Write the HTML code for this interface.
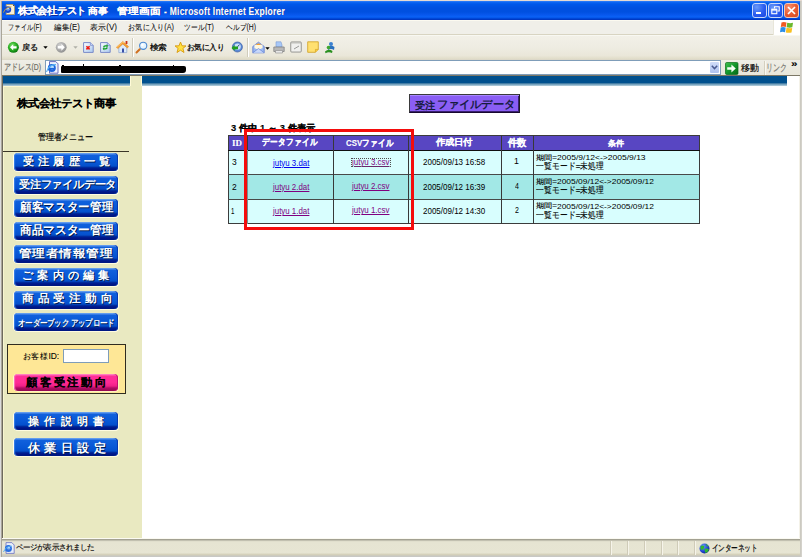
<!DOCTYPE html>
<html><head><meta charset="utf-8">
<style>
*{margin:0;padding:0;box-sizing:border-box}
html,body{width:802px;height:557px;overflow:hidden;background:#ece9d8;font-family:"Liberation Sans",sans-serif;position:relative}
.a{position:absolute}
.tx{position:absolute;white-space:nowrap;line-height:1;transform-origin:0 0;font-family:"Liberation Sans",sans-serif;}
svg{position:absolute;overflow:visible}
#frameL{left:0;top:0;width:2px;height:557px;background:linear-gradient(90deg,#dcdcdc 0,#dcdcdc 1px,#aaa69a 1px)}
#frameR{left:800px;top:0;width:2px;height:557px;background:linear-gradient(90deg,#c8c6bc,#d8d6d0)}
#topedge{left:0;top:0;width:802px;height:1px;background:#e6dad2}
#title{left:2px;top:1px;width:798px;height:19px;background:linear-gradient(#3a86fa 0,#1068f4 1px,#0058ea 3px,#0050e0 7px,#0050e0 11px,#0858ee 14px,#0a62f6 16px,#0048d8 17.5px,#0030b8 19px)}
#menu{left:2px;top:20px;width:798px;height:15px;background:#f0efe9;border-top:1px solid #fcfaf0;border-bottom:1px solid #d8d4c2}
#flag{left:773px;top:20px;width:27px;height:15px;background:#fff;border-left:1px solid #e8e6da}
#tool{left:2px;top:35px;width:798px;height:24px;background:linear-gradient(#f2f0e8 0,#eeece2 50%,#eae7d9 85%,#e0dcc8 100%);border-top:1px solid #f8f8f2}
#addr{left:2px;top:59px;width:798px;height:17px;background:linear-gradient(#efeee6 0,#e8e6da 15px,#7c7866 15px);border-top:1px solid #dcd8c8}
#addrbox{left:45px;top:60px;width:676px;height:15px;background:#fff;border:1px solid #7f9db9}
#page{left:2px;top:76px;width:797px;height:462px;background:#fff;border-left:1px solid #6e6a5e}
#side{left:3px;top:76px;width:139px;height:462px;background:#e9e9c1}
#pageR{left:799px;top:76px;width:1px;height:462px;background:#f4f2e8}
.bar{position:absolute;top:76px;height:7px;background:#00508e}
.barg{position:absolute;top:83px;height:3px;background:linear-gradient(#2a6a98,#88b0c8 60%,#b8d0dc)}
.btn{position:absolute;left:14px;width:104px;height:18px;border-radius:4px;background:linear-gradient(#7ab0f4 0,#4a88e8 1px,#1060dc 2.5px,#0858d6 50%,#0450cc 13px,#002a9c 14.5px,#001488 16px,#001a80 100%);box-shadow:inset 2px 0 1px -1px #3a80e8,inset -1px 0 0 #0838b0,1px 1px 0 #fffce0,-1px 0 0 #fffef0,0 1px 0 #fffce0}
#status{left:2px;top:538px;width:798px;height:19px;background:linear-gradient(#fbfaf2 0,#fbfaf2 1px,#9e9c8c 1px,#a8a698 2px,#dcdac8 3px,#e6e4d2 4px,#e7e5d3 15px,#d8d4be 16px,#d2ceb8 17px,#c8c8c4 18px)}
.sep{position:absolute;top:541px;width:2px;height:14px;border-left:1px solid #cfcbb8;border-right:1px solid #f6f4ea}
td,th{padding:0}
</style></head><body>
<div id="frameL" class="a"></div>
<div id="frameR" class="a"></div>
<div id="topedge" class="a"></div>
<div id="title" class="a"></div>
<!-- title icon -->
<svg style="left:3px;top:4px" width="12" height="11" viewBox="0 0 12 11">
 <path d="M3.2 0.5 H10 L11.5 2 V10.5 H3.2 Z" fill="#f8f0d8" stroke="#b89a58" stroke-width="0.8"/>
 <path d="M10 0.5 L11.5 2 H10 Z" fill="#5a4018"/>
 <circle cx="4.8" cy="5.6" r="3.4" fill="#1a4ad0"/>
 <circle cx="5" cy="5.3" r="1.6" fill="#a8d8ff"/>
 <rect x="3.4" y="5.6" width="3.4" height="0.9" fill="#1a4ad0"/>
 <path d="M0.4 8.6 Q2.5 3 8.5 2.8" stroke="#d8a828" stroke-width="0.9" fill="none"/>
</svg>
<!-- title buttons -->
<div class="a" style="left:752px;top:3px;width:15px;height:15px;border:1px solid #c8d8fa;border-radius:3px;background:radial-gradient(circle at 30% 25%,#6a9af8,#2a5cf0 55%,#1a48e0)"></div>
<div class="a" style="left:756px;top:12px;width:5px;height:2px;background:#fff"></div>
<div class="a" style="left:768px;top:3px;width:15px;height:15px;border:1px solid #c8d8fa;border-radius:3px;background:radial-gradient(circle at 30% 25%,#6a9af8,#2a5cf0 55%,#1a48e0)"></div>
<svg style="left:771px;top:6px" width="9" height="9" viewBox="0 0 9 9"><path d="M3.5 2.5 V0.8 H8.2 V5 H6.5" fill="none" stroke="#fff" stroke-width="1.1"/><rect x="0.8" y="3.2" width="5" height="4.5" fill="none" stroke="#fff" stroke-width="1.1"/><rect x="0.8" y="3.2" width="5" height="1.4" fill="#fff"/></svg>
<div class="a" style="left:784px;top:3px;width:15px;height:15px;border:1px solid #f0c8b8;border-radius:3px;background:radial-gradient(circle at 30% 25%,#f89070,#e85a30 55%,#d04820)"></div>
<svg style="left:787px;top:6px" width="9" height="9" viewBox="0 0 9 9"><path d="M1 1 L8 8 M8 1 L1 8" stroke="#fff" stroke-width="1.7"/></svg>

<div id="menu" class="a"></div>
<div id="flag" class="a"></div>
<svg style="left:780px;top:21px" width="14" height="13" viewBox="0 0 14 13">
 <path d="M1.5 1.5 Q3.5 0.5 6.5 1.5 L5.8 6 Q3 5 0.8 6 Z" fill="#f05a22"/>
 <path d="M7.2 1.7 Q10 2.6 13 1.8 L12.3 6.3 Q9.5 7 6.6 6.2 Z" fill="#6ab82c"/>
 <path d="M0.7 6.6 Q3 5.6 5.7 6.6 L5 11.2 Q2.6 10.2 0 11.2 Z" fill="#2a8ee8"/>
 <path d="M6.5 6.8 Q9.4 7.6 12.2 6.9 L11.5 11.4 Q8.6 12.2 5.8 11.4 Z" fill="#f8c020"/>
</svg>

<div id="tool" class="a"></div>
<!-- back -->
<svg style="left:7px;top:41px" width="13" height="13" viewBox="0 0 13 13">
 <defs><radialGradient id="gb" cx="0.4" cy="0.35" r="0.7"><stop offset="0" stop-color="#7ce06a"/><stop offset="0.6" stop-color="#22a81c"/><stop offset="1" stop-color="#0a7010"/></radialGradient></defs>
 <circle cx="6.4" cy="6.3" r="5.5" fill="url(#gb)"/>
 <path d="M3 6.3 L6.2 3.2 V5.2 H9.6 V7.4 H6.2 V9.4 Z" fill="#fff"/>
</svg>
<svg style="left:43px;top:46px" width="5" height="3" viewBox="0 0 5 3"><path d="M0.3 0.3 H4.7 L2.5 2.7 Z" fill="#000"/></svg>
<!-- forward (disabled) -->
<svg style="left:55px;top:41px" width="13" height="13" viewBox="0 0 13 13">
 <defs><radialGradient id="gf" cx="0.4" cy="0.35" r="0.7"><stop offset="0" stop-color="#d8d8d8"/><stop offset="0.6" stop-color="#a8a8a8"/><stop offset="1" stop-color="#8a8a8a"/></radialGradient></defs>
 <circle cx="6.2" cy="6.3" r="5.4" fill="url(#gf)"/>
 <path d="M9.8 6.3 L6.4 2.9 V5.1 H2.8 V7.5 H6.4 V9.7 Z" fill="#ffffff"/>
</svg>
<svg style="left:73px;top:46px" width="5" height="3" viewBox="0 0 5 3"><path d="M0.3 0.3 H4.7 L2.5 2.7 Z" fill="#b0b0a8"/></svg>
<!-- stop -->
<svg style="left:83px;top:42px" width="11" height="11" viewBox="0 0 11 11">
 <defs><linearGradient id="pg" x1="0" y1="0" x2="1" y2="1"><stop offset="0" stop-color="#ffffff"/><stop offset="1" stop-color="#a8c8f0"/></linearGradient></defs>
 <path d="M0.6 0.6 H7.4 L10.2 3.4 V10.4 H0.6 Z" fill="url(#pg)" stroke="#7a8ac8" stroke-width="1"/>
 <path d="M7.4 0.6 V3.4 H10.2" fill="#c8d8f8" stroke="#7a8ac8" stroke-width="0.7"/>
 <path d="M3.4 4.2 L6.6 7.4 M6.6 4.2 L3.4 7.4" stroke="#f01a10" stroke-width="1.6"/>
</svg>
<!-- refresh -->
<svg style="left:100px;top:42px" width="11" height="11" viewBox="0 0 11 11">
 <path d="M0.6 0.6 H7.4 L10.2 3.4 V10.4 H0.6 Z" fill="url(#pg)" stroke="#7a8ac8" stroke-width="1"/>
 <path d="M7.4 0.6 V3.4 H10.2" fill="#c8d8f8" stroke="#7a8ac8" stroke-width="0.7"/>
 <path d="M3 5.2 Q3.2 3 5.6 3.2 L6.6 3.3 V2.2 L8.2 4 L6.6 5.6 V4.5 H5.6 Q4.4 4.5 4.3 5.6 Z" fill="#10a020"/>
 <path d="M7.8 5.6 Q7.6 7.8 5.2 7.6 L4.2 7.5 V8.6 L2.6 6.8 L4.2 5.2 V6.3 H5.2 Q6.4 6.3 6.5 5.2 Z" fill="#10a020"/>
</svg>
<!-- home -->
<svg style="left:116px;top:40px" width="13" height="14" viewBox="0 0 13 14">
 <path d="M2.8 7 V12.6 H10.8 V7 L6.8 3.6 Z" fill="#dceafa" stroke="#8aa4d0" stroke-width="0.7"/>
 <path d="M6 8.6 H8 V12.6 H6 Z" fill="#3a50a8"/>
 <path d="M0.4 7.2 L6.8 1.4 L12.6 6.6 L11.4 8 L6.8 4 L1.8 8.6 Z" fill="#f8a030" stroke="#e08018" stroke-width="0.5"/>
 <path d="M1.2 7 L6.8 2 L8 3" stroke="#ffd080" stroke-width="0.8" fill="none"/>
 <rect x="9.6" y="1" width="1.8" height="3" fill="#c83018"/>
</svg>
<div class="a" style="left:132px;top:38px;width:2px;height:19px;border-left:1px solid #d0ccbc;border-right:1px solid #fff"></div>
<!-- search -->
<svg style="left:135px;top:41px" width="13" height="13" viewBox="0 0 13 13">
 <path d="M1.5 11.5 L4.8 8.2" stroke="#d07020" stroke-width="2" stroke-linecap="round"/>
 <circle cx="8.2" cy="4.8" r="3.6" fill="#e4f4ff" stroke="#4a88d0" stroke-width="1.1"/>
 <circle cx="7.4" cy="4" r="1.3" fill="#fff"/>
</svg>
<!-- star -->
<svg style="left:174px;top:41px" width="13" height="13" viewBox="0 0 13 13">
 <path d="M6.5 1 L8 4.8 L12 4.9 L8.9 7.4 L10 11.5 L6.5 9.2 L3 11.5 L4.1 7.4 L1 4.9 L5 4.8 Z" fill="#ffe040" stroke="#d89a10" stroke-width="0.9"/>
</svg>
<!-- history -->
<svg style="left:231px;top:41px" width="12" height="12" viewBox="0 0 12 12">
 <circle cx="6.4" cy="6" r="5" fill="#5a8ad8" stroke="#3a5aa0" stroke-width="0.7"/>
 <circle cx="6.6" cy="5.6" r="3.2" fill="#c8e0f8"/>
 <path d="M6.6 5.8 L8.4 3.6" stroke="#203880" stroke-width="0.9"/>
 <path d="M0.5 7 L3.6 4 L3.6 5.6 L7 5.6 L7 8.2 L3.6 8.2 L3.6 9.8 Z" fill="#20a020"/>
</svg>
<div class="a" style="left:247px;top:38px;width:2px;height:19px;border-left:1px solid #d0ccbc;border-right:1px solid #fff"></div>
<!-- mail -->
<svg style="left:252px;top:41px" width="13" height="13" viewBox="0 0 13 13">
 <path d="M0.8 5.5 L6.5 1.2 L12.2 5.5 V11.8 H0.8 Z" fill="#9ab8f0" stroke="#5a78d0" stroke-width="0.8"/>
 <path d="M2.5 3.8 H10.5 V7 L6.5 9 L2.5 7 Z" fill="#fff8e0"/>
 <path d="M3.5 4 L6.5 2.2 L9.5 4" fill="#f4a030"/>
 <path d="M0.8 11.8 L6.5 7.5 L12.2 11.8" fill="#c8d8fa" stroke="#5a78d0" stroke-width="0.6"/>
</svg>
<svg style="left:265px;top:47px" width="5" height="3" viewBox="0 0 5 3"><path d="M0.3 0.3 H4.7 L2.5 2.7 Z" fill="#000"/></svg>
<!-- print -->
<svg style="left:273px;top:41px" width="12" height="13" viewBox="0 0 12 13">
 <path d="M3 0.8 H8 L9 4 V6 H3 Z" fill="#a8c8f8" stroke="#7a9ad0" stroke-width="0.6"/>
 <path d="M0.8 6 H11.2 V10.5 H0.8 Z" fill="#b8b8b8" stroke="#7a7a7a" stroke-width="0.7"/>
 <path d="M2.5 9.5 H9.5 V12 H2.5 Z" fill="#e8e8e8" stroke="#8a8a8a" stroke-width="0.6"/>
</svg>
<!-- edit -->
<svg style="left:290px;top:41px" width="12" height="12" viewBox="0 0 12 12">
 <rect x="0.7" y="0.9" width="10.6" height="10.2" rx="1" fill="#d8d8d4" stroke="#8a8a88" stroke-width="0.8"/>
 <rect x="1.6" y="3" width="8.8" height="7.2" fill="#f0f0ee"/>
 <path d="M4 8 L9 5" stroke="#9a9a98" stroke-width="1"/>
</svg>
<!-- note -->
<svg style="left:307px;top:41px" width="12" height="12" viewBox="0 0 12 12">
 <path d="M0.7 0.8 H11.3 V8.4 L8.4 11.3 H0.7 Z" fill="#ffe070" stroke="#d0a020" stroke-width="0.8"/>
 <path d="M8.4 11.3 V8.4 H11.3" fill="#f8c840" stroke="#d0a020" stroke-width="0.6"/>
</svg>
<!-- messenger -->
<svg style="left:324px;top:41px" width="12" height="13" viewBox="0 0 12 13">
 <circle cx="7" cy="3" r="2" fill="#3a80d0"/>
 <path d="M3.5 6 Q7 3.5 10.5 6 L10 9 Q7 7 4 9 Z" fill="#2a70c0"/>
 <circle cx="4.5" cy="6.5" r="1.8" fill="#40a830"/>
 <path d="M1 10.5 Q4.5 7.5 8.5 10 L8 12 Q4.5 10.5 1.5 12.3 Z" fill="#2a9020"/>
</svg>

<div id="addr" class="a"></div>
<div id="addrbox" class="a"></div>
<!-- ie icon address -->
<svg style="left:46px;top:61px" width="13" height="13" viewBox="0 0 13 13">
 <path d="M3.5 0.6 H9.8 L12 2.8 V12.2 H3.5 Z" fill="#eef2fc" stroke="#5a60b8" stroke-width="0.9"/>
 <circle cx="5.8" cy="7" r="4" fill="#1e66dc"/>
 <circle cx="6.1" cy="6.4" r="1.9" fill="#c0e4ff"/>
 <rect x="3.8" y="6.9" width="5.4" height="1.1" fill="#1e66dc"/>
 <path d="M0.5 11 Q2.5 3.5 10 3.6" stroke="#58b4f4" stroke-width="1.1" fill="none"/>
</svg>
<div class="a" style="left:61px;top:66px;width:125px;height:7px;background:#000;border-radius:1px 2px 3px 1px"></div>
<div class="a" style="left:62px;top:64.6px;width:2px;height:2px;background:#000"></div>
<div class="a" style="left:83px;top:64.3px;width:1px;height:2px;background:#000"></div>
<div class="a" style="left:119px;top:64.5px;width:2px;height:2px;background:#000"></div>
<div class="a" style="left:173px;top:64.6px;width:1px;height:2px;background:#000"></div>
<!-- dropdown -->
<div class="a" style="left:709px;top:61px;width:11px;height:13px;background:linear-gradient(#d0dcf8,#b0c4f0);border:1px solid #fff;border-radius:2px"></div>
<svg style="left:711px;top:65px" width="7" height="5" viewBox="0 0 7 5"><path d="M0.8 0.8 L3.5 3.6 L6.2 0.8" stroke="#4a5a90" stroke-width="1.5" fill="none"/></svg>
<!-- go -->
<svg style="left:725px;top:62px" width="14" height="13" viewBox="0 0 14 13">
 <defs><linearGradient id="gg" x1="0" y1="0" x2="1" y2="1"><stop offset="0" stop-color="#40c050"/><stop offset="0.5" stop-color="#12962a"/><stop offset="1" stop-color="#066818"/></linearGradient></defs>
 <rect x="0.5" y="0.5" width="12.5" height="12" rx="1.2" fill="url(#gg)" stroke="#0a6a1a" stroke-width="0.7"/>
 <path d="M2.2 5.3 H6.4 V2.4 L10.8 6.5 L6.4 10.6 V7.7 H2.2 Z" fill="#f4fff4"/>
</svg>
<div class="a" style="left:764px;top:61px;width:2px;height:14px;border-left:1px solid #d4d0c0;border-right:1px solid #faf8f0"></div>

<div id="page" class="a"></div>
<div id="pageR" class="a"></div>
<div id="side" class="a"></div>
<div class="bar" style="left:3px;width:127px"></div>
<div class="barg" style="left:3px;width:127px"></div>
<div class="bar" style="left:142px;width:645px"></div>
<div class="barg" style="left:142px;width:645px"></div>
<div class="a" style="left:130px;top:76px;width:1px;height:10px;background:#fffbd8"></div>
<div class="a" style="left:141px;top:76px;width:1px;height:10px;background:#fffbd8"></div>
<div class="a" style="left:3px;top:86px;width:127px;height:1px;background:#fff8d0"></div><div class="a" style="left:3px;top:86px;width:1px;height:452px;background:#f8f6d0"></div>

<div class="a" style="left:3px;top:151px;width:126px;height:1px;background:#3a3628"></div>
<div class="btn" style="top:153px"></div>
<div class="btn" style="top:176px"></div>
<div class="btn" style="top:199px"></div>
<div class="btn" style="top:222px"></div>
<div class="btn" style="top:245px"></div>
<div class="btn" style="top:268px"></div>
<div class="btn" style="top:291px"></div>
<div class="btn" style="top:313px"></div>
<div class="a" style="left:7px;top:344px;width:119px;height:50px;background:#fee796;border:1px solid #302c20"></div>
<div class="a" style="left:63px;top:349px;width:46px;height:14px;background:#fff;border:1px solid #7f9db9"></div>
<div class="btn" style="top:374px;height:17px;background:linear-gradient(#ffa0d0 0,#ff5cb0 1px,#ff2e98 2.5px,#ff2a94 50%,#f02088 12px,#b00c64 14px,#900850 100%);box-shadow:inset 2px 0 1px -1px #ff70c0,inset -1px 0 0 #c01070,1px 1px 0 #fff4c0,-1px 0 0 #fff8d0"></div>
<div class="btn" style="top:412px"></div>
<div class="btn" style="top:438px"></div>

<div class="a" style="left:409px;top:94px;width:111px;height:19px;background:#8a5ef4;border:1px solid #3a3a3a;border-right-color:#202020;border-bottom-color:#180830;box-shadow:inset 0 1px 0 #a888ff,inset -1px -1px 0 #3a2070"></div>


<div class="a" style="left:228px;top:135px;width:472px;height:89px;background:#d8fefe;border:1px solid #3c3c3c"></div>
<div class="a" style="left:229px;top:136px;width:470px;height:14px;background:#5846c2"></div>
<div class="a" style="left:229px;top:175px;width:470px;height:24px;background:#a2e8e6"></div>
<div class="a" style="left:228px;top:150px;width:472px;height:1px;background:#101010"></div>
<div class="a" style="left:228px;top:174px;width:472px;height:1px;background:#484848"></div>
<div class="a" style="left:228px;top:199px;width:472px;height:1px;background:#484848"></div>
<div class="a" style="left:247px;top:135px;width:1px;height:15px;background:#383838"></div><div class="a" style="left:247px;top:150px;width:1px;height:74px;background:#7a9090"></div>
<div class="a" style="left:333px;top:135px;width:1px;height:89px;background:#383838"></div>
<div class="a" style="left:408px;top:135px;width:1px;height:89px;background:#383838"></div>
<div class="a" style="left:501px;top:135px;width:1px;height:89px;background:#383838"></div>
<div class="a" style="left:533px;top:135px;width:1px;height:89px;background:#383838"></div>

<div id="status" class="a"></div>
<svg style="left:3px;top:542px" width="12" height="12" viewBox="0 0 12 12">
 <path d="M3 0.6 H8.8 L11.2 3 V11.4 H3 Z" fill="#e8eefa" stroke="#6a70c0" stroke-width="0.8"/>
 <circle cx="5.4" cy="6.6" r="3.5" fill="#2a6ee0"/>
 <circle cx="5.7" cy="6.2" r="1.5" fill="#b8e0ff"/>
 <rect x="3.8" y="6.6" width="4.4" height="1" fill="#2a6ee0"/>
 <path d="M0.5 10 Q3 3.8 9 4.2" stroke="#5ab0f0" stroke-width="1" fill="none"/>
</svg>
<div class="sep" style="left:610px"></div>
<div class="sep" style="left:627px"></div>
<div class="sep" style="left:644px"></div>
<div class="sep" style="left:661px"></div>
<div class="sep" style="left:677px"></div>
<div class="sep" style="left:694px"></div>
<svg style="left:699px;top:543px" width="11" height="11" viewBox="0 0 11 11">
 <defs><radialGradient id="gl" cx="0.35" cy="0.3" r="0.8"><stop offset="0" stop-color="#6a9aff"/><stop offset="0.7" stop-color="#1a3ac8"/><stop offset="1" stop-color="#0a1a70"/></radialGradient></defs>
 <circle cx="5.5" cy="5.5" r="5" fill="url(#gl)"/>
 <path d="M1.5 3.5 Q3.5 1.5 5.5 3.5 Q5 6.5 2.5 7 Q1 5.5 1.5 3.5 Z M5.5 6 Q8 5 10 6.5 Q9 9.5 6.5 10 Q5.5 8 5.5 6 Z M6.5 1 Q9 1.5 9.8 4 Q7.5 4 6.5 1 Z" fill="#30b830"/>
</svg>

<div class="tx" style="left:17.80px;top:6.00px;font-size:12px;font-weight:bold;-webkit-text-stroke:0.12px currentColor;color:#fff;text-shadow:1px 1px 0 #0a2a9a;transform:scale(0.8111,0.7917)">株式会社テスト</div>
<div class="tx" style="left:87.70px;top:6.20px;font-size:12px;font-weight:bold;-webkit-text-stroke:0.12px currentColor;color:#fff;text-shadow:1px 1px 0 #0a2a9a;transform:scale(0.8458,0.7583)">商事</div>
<div class="tx" style="left:117.20px;top:6.20px;font-size:12px;font-weight:bold;-webkit-text-stroke:0.12px currentColor;color:#fff;text-shadow:1px 1px 0 #0a2a9a;transform:scale(0.9106,0.7583)">管理画面</div>
<div class="tx" style="left:164.20px;top:5.75px;font-size:12px;font-weight:bold;letter-spacing:0.3px;-webkit-text-stroke:0.12px currentColor;color:#fff;text-shadow:1px 1px 0 #0a2a9a;transform:scale(0.7148,0.8500)">- Microsoft Internet Explorer</div>
<div class="tx" style="left:53.60px;top:23.30px;font-size:11px;-webkit-text-stroke:0.1px #000;color:#111;transform:scale(0.7028,0.7545)">編集(E)</div>
<div class="tx" style="left:8.32px;top:23.30px;font-size:11px;-webkit-text-stroke:0.1px #000;color:#111;transform:scale(0.5789,0.7545)">ファイル(F)</div>
<div class="tx" style="left:90.06px;top:23.30px;font-size:11px;-webkit-text-stroke:0.1px #000;color:#111;transform:scale(0.7371,0.7545)">表示(V)</div>
<div class="tx" style="left:127.64px;top:23.30px;font-size:11px;-webkit-text-stroke:0.1px #000;color:#111;transform:scale(0.6603,0.7545)">お気に入り(A)</div>
<div class="tx" style="left:184.37px;top:23.30px;font-size:11px;-webkit-text-stroke:0.1px #000;color:#111;transform:scale(0.6348,0.7545)">ツール(T)</div>
<div class="tx" style="left:226.00px;top:23.30px;font-size:11px;-webkit-text-stroke:0.1px #000;color:#111;transform:scale(0.6208,0.7545)">ヘルプ(H)</div>
<div class="tx" style="left:22.00px;top:43.90px;font-size:11px;-webkit-text-stroke:0.35px #000;color:#000;transform:scale(0.6905,0.6818)">戻る</div>
<div class="tx" style="left:149.60px;top:43.50px;font-size:11px;-webkit-text-stroke:0.35px #000;color:#000;transform:scale(0.7682,0.7091)">検索</div>
<div class="tx" style="left:186.92px;top:43.50px;font-size:11px;-webkit-text-stroke:0.35px #000;color:#000;transform:scale(0.6788,0.7091)">お気に入り</div>
<div class="tx" style="left:4.25px;top:62.70px;font-size:11px;-webkit-text-stroke:0.2px currentColor;color:#6c6c64;transform:scale(0.6228,0.8000)">アドレス(D)</div>
<div class="tx" style="left:741.00px;top:63.50px;font-size:11px;-webkit-text-stroke:0.2px currentColor;color:#000;transform:scale(0.8095,0.8100)">移動</div>
<div class="tx" style="left:766.10px;top:62.60px;font-size:11px;-webkit-text-stroke:0.2px currentColor;color:#7c7c76;transform:scale(0.6321,0.9000)">リンク</div>
<div class="tx" style="left:790.94px;top:59.60px;font-size:11px;font-weight:bold;-webkit-text-stroke:0.12px currentColor;color:#000;transform:scale(1.0600,0.8000)">»</div>
<div class="tx" style="left:16.90px;top:97.60px;font-size:13px;font-weight:bold;-webkit-text-stroke:0.05px #000;color:#000;transform:scale(0.8453,0.8154)">株式会社テスト商事</div>
<div class="tx" style="left:38.43px;top:133.00px;font-size:10px;-webkit-text-stroke:0.2px currentColor;color:#000;transform:scale(0.7750,0.8667)">管理者メニュー</div>
<div class="tx" style="left:22.90px;top:156.20px;font-size:12px;font-weight:bold;letter-spacing:4px;color:#fff;text-shadow:1px 1px 0 #001a50;-webkit-text-stroke:0;transform:scale(0.9489,0.9417)">受注履歴一覧</div>
<div class="tx" style="left:18.90px;top:179.40px;font-size:12px;font-weight:bold;color:#fff;text-shadow:1px 1px 0 #001a50;-webkit-text-stroke:0;transform:scale(0.8991,0.8833)">受注ファイルデータ</div>
<div class="tx" style="left:19.70px;top:201.10px;font-size:12px;font-weight:bold;color:#fff;text-shadow:1px 1px 0 #001a50;-webkit-text-stroke:0;transform:scale(0.9708,1.0250)">顧客マスター管理</div>
<div class="tx" style="left:19.70px;top:224.00px;font-size:12px;font-weight:bold;color:#fff;text-shadow:1px 1px 0 #001a50;-webkit-text-stroke:0;transform:scale(0.9708,1.0000)">商品マスター管理</div>
<div class="tx" style="left:19.40px;top:247.60px;font-size:12px;font-weight:bold;letter-spacing:1px;color:#fff;text-shadow:1px 1px 0 #001a50;-webkit-text-stroke:0;transform:scale(1.0333,0.9000)">管理者情報管理</div>
<div class="tx" style="left:21.84px;top:270.10px;font-size:12px;font-weight:bold;letter-spacing:4px;color:#fff;text-shadow:1px 1px 0 #001a50;-webkit-text-stroke:0;transform:scale(0.9560,0.9417)">ご案内の編集</div>
<div class="tx" style="left:22.30px;top:293.20px;font-size:12px;font-weight:bold;letter-spacing:4px;color:#fff;text-shadow:1px 1px 0 #001a50;-webkit-text-stroke:0;transform:scale(0.9822,0.9333)">商品受注動向</div>
<div class="tx" style="left:18.09px;top:318.87px;font-size:9px;font-weight:bold;color:#fff;text-shadow:1px 1px 0 #001a50;-webkit-text-stroke:0;transform:scale(0.8068,0.9667)">オーダーブック アップロード</div>
<div class="tx" style="left:22.95px;top:352.40px;font-size:10px;color:#000;-webkit-text-stroke:0.1px #000;transform:scale(0.8463,0.8400)">お客様ID:</div>
<div class="tx" style="left:26.00px;top:377.09px;font-size:12.5px;font-weight:bold;letter-spacing:2px;-webkit-text-stroke:0.08px #000;color:#000;transform:scale(0.9195,0.8923)">顧客受注動向</div>
<div class="tx" style="left:28.30px;top:414.90px;font-size:12px;font-weight:bold;letter-spacing:5px;color:#fff;text-shadow:1px 1px 0 #001a50;-webkit-text-stroke:0;transform:scale(0.9600,0.9500)">操作説明書</div>
<div class="tx" style="left:28.30px;top:441.80px;font-size:12px;font-weight:bold;letter-spacing:5px;color:#fff;text-shadow:1px 1px 0 #001a50;-webkit-text-stroke:0;transform:scale(0.9696,0.9583)">休業日設定</div>
<div class="tx" style="left:415.10px;top:99.70px;font-size:13px;-webkit-text-stroke:0.45px currentColor;color:#101838;transform:scale(0.8038,0.7769)">受注</div>
<div class="tx" style="left:437.45px;top:98.57px;font-size:13px;-webkit-text-stroke:0.45px currentColor;color:#101838;transform:scale(0.8545,0.8333)">ファイルデータ</div>
<div class="tx" style="left:230.70px;top:123.60px;font-size:9px;font-weight:bold;-webkit-text-stroke:0.12px currentColor;color:#000;transform:scale(1.0378,1.0000)">3 件中 1 ～ 3 件表示</div>
<div class="tx" style="left:232.30px;top:139.26px;font-size:10px;font-weight:bold;font-family:Liberation Serif,serif;-webkit-text-stroke:0.12px currentColor;color:#fff;transform:scale(0.9000,0.8429)">ID</div>
<div class="tx" style="left:262.20px;top:137.26px;font-size:10px;font-weight:bold;-webkit-text-stroke:0.12px currentColor;color:#fff;transform:scale(0.7971,0.9444)">データファイル</div>
<div class="tx" style="left:346.00px;top:138.20px;font-size:10px;font-weight:bold;-webkit-text-stroke:0.12px currentColor;color:#fff;transform:scale(0.7852,0.9444)">CSVファイル</div>
<div class="tx" style="left:436.20px;top:138.30px;font-size:10px;font-weight:bold;-webkit-text-stroke:0.12px currentColor;color:#fff;transform:scale(0.8975,0.8600)">作成日付</div>
<div class="tx" style="left:508.00px;top:138.30px;font-size:10px;font-weight:bold;-webkit-text-stroke:0.12px currentColor;color:#fff;transform:scale(0.8850,0.9556)">件数</div>
<div class="tx" style="left:607.80px;top:138.80px;font-size:10px;font-weight:bold;-webkit-text-stroke:0.12px currentColor;color:#fff;transform:scale(0.8250,0.8222)">条件</div>
<div class="tx" style="left:231.60px;top:158.40px;font-size:9px;color:#000;-webkit-text-stroke:0;transform:scale(0.9400,1.0000)">3</div>
<div class="tx" style="left:273.00px;top:158.70px;font-size:9px;text-decoration:underline;color:#0000ee;-webkit-text-stroke:0;transform:scale(0.8762,1.0000)">jutyu 3.dat</div>
<div class="tx" style="left:351.90px;top:157.70px;font-size:9px;text-decoration:underline;color:#800080;-webkit-text-stroke:0;transform:scale(0.8814,1.0000)">jutyu 3.csv</div>
<div class="tx" style="left:422.80px;top:158.20px;font-size:9px;color:#000;-webkit-text-stroke:0;transform:scale(0.8886,1.0000)">2005/09/13 16:58</div>
<div class="tx" style="left:514.12px;top:157.40px;font-size:9px;color:#000;-webkit-text-stroke:0;transform:scale(0.9750,1.0000)">1</div>
<div class="tx" style="left:535.79px;top:154.50px;font-size:8px;color:#000;-webkit-text-stroke:0.15px #000;transform:scale(1.0105,0.8714)">期間=</div>
<div class="tx" style="left:556.50px;top:154.00px;font-size:8px;color:#000;-webkit-text-stroke:0;transform:scale(1.0651,1.0000)">2005/9/12&lt;-&gt;2005/9/13</div>
<div class="tx" style="left:536.31px;top:162.00px;font-size:9px;color:#000;-webkit-text-stroke:0.12px #000;transform:scale(0.8853,1.0375)">一覧モード=未処理</div>
<div class="tx" style="left:231.60px;top:182.70px;font-size:9px;color:#000;-webkit-text-stroke:0;transform:scale(0.9400,1.0000)">2</div>
<div class="tx" style="left:273.00px;top:183.00px;font-size:9px;text-decoration:underline;color:#800080;-webkit-text-stroke:0;transform:scale(0.8762,1.0000)">jutyu 2.dat</div>
<div class="tx" style="left:351.90px;top:182.00px;font-size:9px;text-decoration:underline;color:#800080;-webkit-text-stroke:0;transform:scale(0.8814,1.0000)">jutyu 2.csv</div>
<div class="tx" style="left:422.80px;top:182.50px;font-size:9px;color:#000;-webkit-text-stroke:0;transform:scale(0.8886,1.0000)">2005/09/12 16:39</div>
<div class="tx" style="left:515.10px;top:181.70px;font-size:9px;color:#000;-webkit-text-stroke:0;transform:scale(0.7800,1.0000)">4</div>
<div class="tx" style="left:535.79px;top:178.80px;font-size:8px;color:#000;-webkit-text-stroke:0.15px #000;transform:scale(1.0105,0.8714)">期間=</div>
<div class="tx" style="left:556.50px;top:178.30px;font-size:8px;color:#000;-webkit-text-stroke:0;transform:scale(1.0522,1.0000)">2005/09/12&lt;-&gt;2005/09/12</div>
<div class="tx" style="left:536.31px;top:186.30px;font-size:9px;color:#000;-webkit-text-stroke:0.12px #000;transform:scale(0.8853,1.0375)">一覧モード=未処理</div>
<div class="tx" style="left:230.92px;top:207.00px;font-size:9px;color:#000;-webkit-text-stroke:0;transform:scale(0.6750,1.0000)">1</div>
<div class="tx" style="left:273.00px;top:207.30px;font-size:9px;text-decoration:underline;color:#800080;-webkit-text-stroke:0;transform:scale(0.8762,1.0000)">jutyu 1.dat</div>
<div class="tx" style="left:351.90px;top:206.30px;font-size:9px;text-decoration:underline;color:#800080;-webkit-text-stroke:0;transform:scale(0.8814,1.0000)">jutyu 1.csv</div>
<div class="tx" style="left:422.80px;top:206.80px;font-size:9px;color:#000;-webkit-text-stroke:0;transform:scale(0.8886,1.0000)">2005/09/12 14:30</div>
<div class="tx" style="left:515.10px;top:206.00px;font-size:9px;color:#000;-webkit-text-stroke:0;transform:scale(0.7800,1.0000)">2</div>
<div class="tx" style="left:535.79px;top:203.10px;font-size:8px;color:#000;-webkit-text-stroke:0.15px #000;transform:scale(1.0105,0.8714)">期間=</div>
<div class="tx" style="left:556.50px;top:202.60px;font-size:8px;color:#000;-webkit-text-stroke:0;transform:scale(1.0522,1.0000)">2005/09/12&lt;-&gt;2005/09/12</div>
<div class="tx" style="left:536.31px;top:210.60px;font-size:9px;color:#000;-webkit-text-stroke:0.12px #000;transform:scale(0.8853,1.0375)">一覧モード=未処理</div>
<div class="tx" style="left:15.85px;top:544.20px;font-size:11px;-webkit-text-stroke:0.2px currentColor;color:#000;transform:scale(0.6466,0.6818)">ページが表示されました</div>
<div class="tx" style="left:711.53px;top:543.71px;font-size:11px;-webkit-text-stroke:0.2px currentColor;color:#000;transform:scale(0.5875,0.7889)">インターネット</div>

<div class="a" style="left:351px;top:157.5px;width:39.5px;height:9.5px;border:1px dotted #505050"></div>
<div class="a" style="left:244px;top:129px;width:170px;height:101px;border:3px solid #f40c0c"></div>

</body></html>
